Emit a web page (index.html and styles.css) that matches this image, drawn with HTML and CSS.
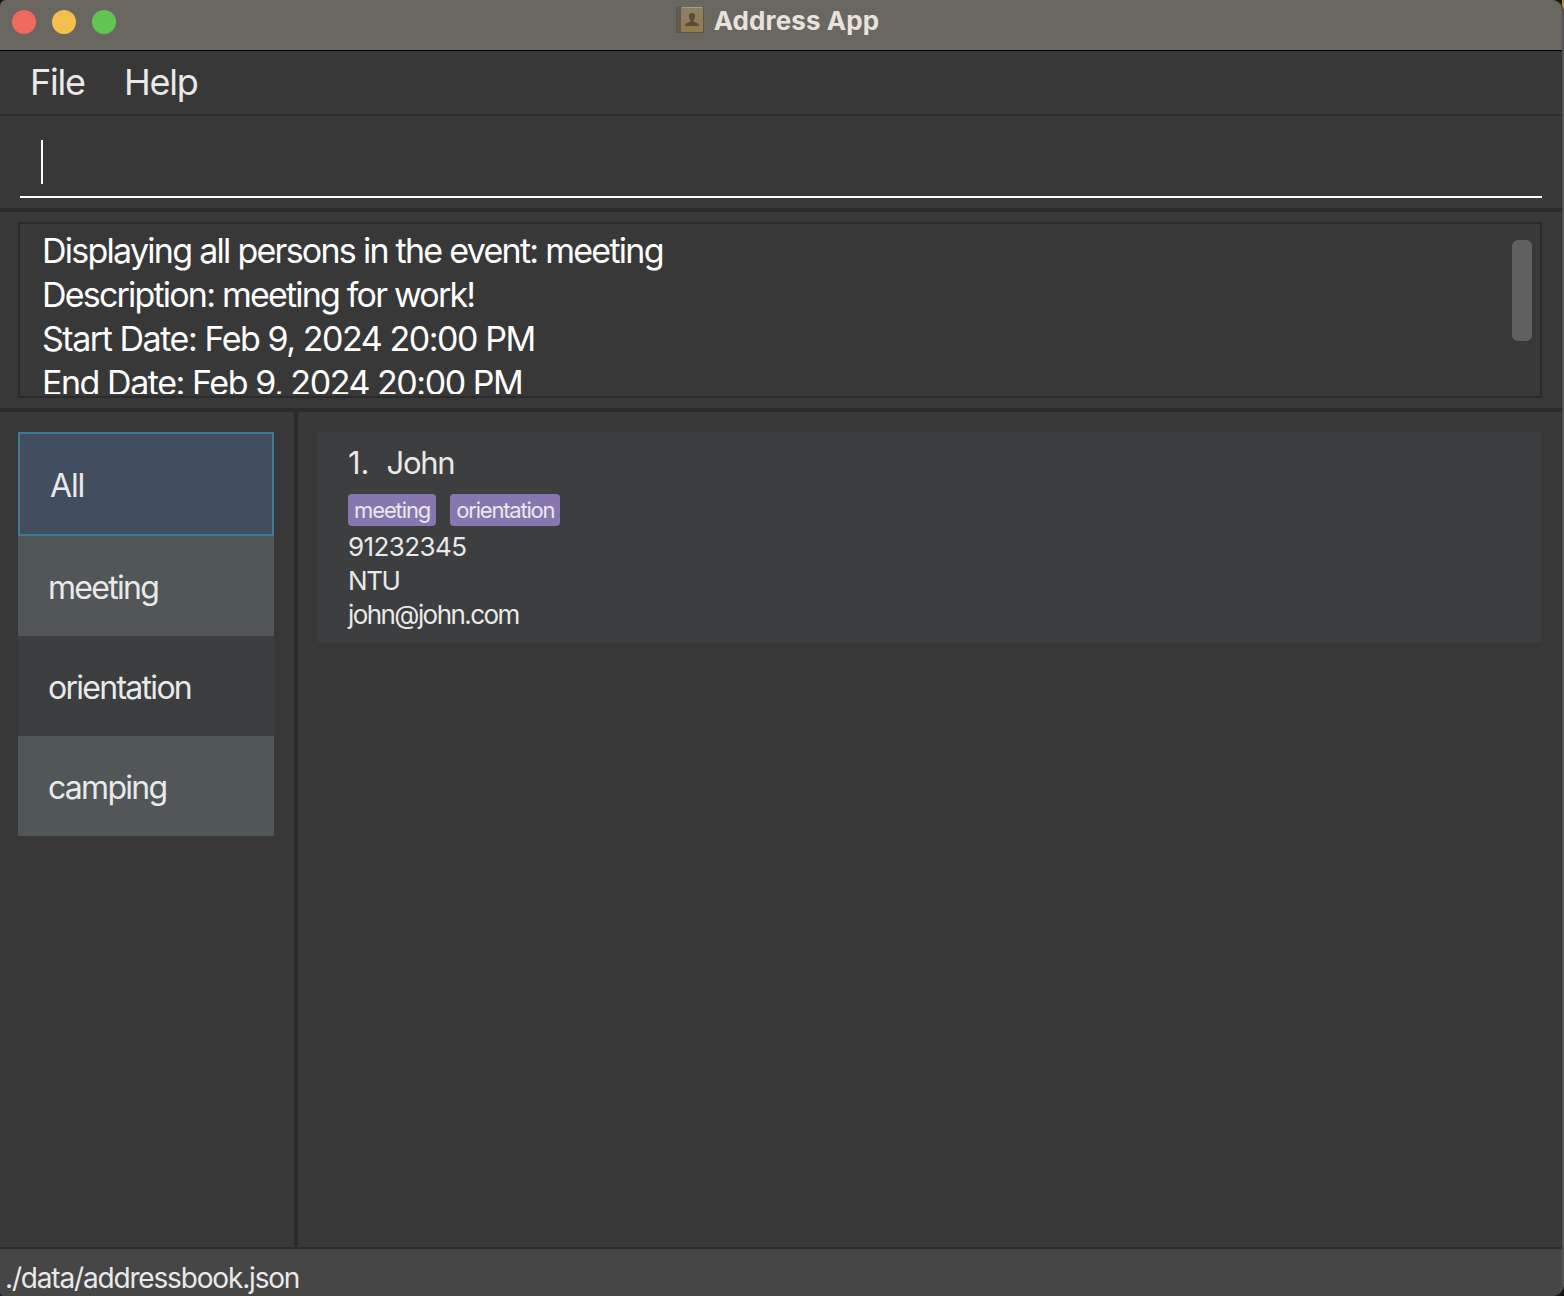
FILE: index.html
```html
<!DOCTYPE html>
<html lang="en">
<head>
<meta charset="utf-8">
<title>Address App</title>
<link rel="stylesheet" href="styles.css">
</head>
<body>
<div class="window">
  <header class="titlebar">
    <div class="lights"><span class="light close"></span><span class="light minimize"></span><span class="light zoom"></span></div>
    <h1 class="title">
      <svg class="book" width="30" height="28" viewBox="0 0 30 28">
        <defs><linearGradient id="cover" x1="0" y1="0" x2="0" y2="1"><stop offset="0" stop-color="#8c7f6b"/><stop offset="1" stop-color="#957b4d"/></linearGradient></defs>
        <rect x="1" y="1" width="28" height="26" rx="1.500" fill="#5d554a"/>
        <rect x="2" y="1" width="4" height="25" fill="#625b54"/>
        <rect x="6" y="1" width="22" height="25" rx="1" fill="url(#cover)"/>
        <path d="M7 1.500h20" stroke="#a99a7d"/>
        <path d="M14 10.500c0-2.500 1-3.500 3-3.500s3 1 3 3.500c0 1.600-.6 2.800-1.500 3.700v1.300c1.500 1 5.500 1.200 5.500 4.500H10c0-3.300 4-3.500 5.500-4.500v-1.300C14.600 13.300 14 12.100 14 10.500z" fill="#584c3c"/>
      </svg>
      <span>Address App</span>
    </h1>
  </header>
  <nav class="menubar"><span class="menu-file">File</span><span class="menu-help">Help</span></nav>
  <section class="command"><div class="field"><span class="caret"></span></div></section>
  <section class="result">
    <div class="result-box">
      <div class="result-text">
        <p class="line-event">Displaying all persons in the event: meeting</p>
        <p class="line-desc">Description: meeting for work!</p>
        <p class="line-date">Start Date: Feb 9, 2024 20:00 PM</p>
        <p class="line-date">End Date: Feb 9, 2024 20:00 PM</p>
      </div>
      <div class="thumb"></div>
    </div>
  </section>
  <main class="split">
    <ul class="events">
      <li class="selected">All</li>
      <li class="odd">meeting</li>
      <li>orientation</li>
      <li class="odd">camping</li>
    </ul>
    <section class="persons">
      <article class="card">
        <h2 class="name"><span class="index">1.</span><span>John</span></h2>
        <div class="tags"><span class="tag">meeting</span><span class="tag">orientation</span></div>
        <p class="phone">91232345</p>
        <p class="address">NTU</p>
        <p class="email">john@john.com</p>
      </article>
    </section>
  </main>
  <footer class="status">./data/addressbook.json</footer>
</div>
</body>
</html>
```
FILE: styles.css
```css
* { box-sizing: border-box; margin: 0; padding: 0; }
body { background: linear-gradient(#c58a2c 0 8px, #151515 12px) 100% 0 / 2px 20px no-repeat, #151515; font-family: Inter, "Liberation Sans", sans-serif; color: #e9e9e9; overflow: hidden; }
.window { width: 1564px; height: 1296px; display: flex; flex-direction: column; background: #383838; border-right: 2px solid #555; border-radius: 6px 12px 12px 4px; overflow: hidden; }
.window span, .window p, .window li, .status { white-space: nowrap; }

.titlebar { height: 51px; flex: none; background: #6a6660; border-bottom: 1px solid #000; display: grid; grid-template-columns: 1fr auto 1fr; align-items: start; }
.lights { display: flex; gap: 16px; padding: 10px 0 0 12px; }
.light { width: 24px; height: 24px; border-radius: 50%; }
.close { background: #ed6a5e; }
.minimize { background: #f5bf4f; }
.zoom { background: #61c554; }
.title { display: flex; gap: 9px; height: 40px; align-items: center; padding-right: 8px; font-size: 26px; font-weight: 700; color: #e6e2dc; letter-spacing: 0.1px; }

.menubar { height: 65px; flex: none; border-bottom: 2px solid #2b2b2b; display: flex; gap: 39px; padding-left: 30px; font-size: 36px; line-height: 62px; letter-spacing: -1.2px; }
.command { height: 96px; flex: none; padding: 24px 20px 0; border-bottom: 4px solid #2b2b2b; }
.field { height: 58px; border-bottom: 2px solid #fff; padding-left: 21px; }
.caret { display: block; width: 2px; height: 44px; background: #fff; }

.result { height: 200px; flex: none; padding: 10px 20px 10px 18px; border-bottom: 4px solid #2b2b2b; }
.result-box { height: 176px; border: 2px solid #2b2b2b; padding: 0 8px 2px 22px; display: flex; justify-content: space-between; }
.result-text { height: 170px; padding-top: 5px; overflow: hidden; font-size: 34px; line-height: 44px; color: #fff; }
.line-event { letter-spacing: -1.73px; }
.line-desc { letter-spacing: -1.8px; }
.line-date { letter-spacing: -1.45px; }
.thumb { width: 20px; height: 101px; margin-top: 16px; border-radius: 6px; background: #606060; }

.split { flex: 1; min-height: 0; display: flex; }
.events { width: 298px; flex: none; list-style: none; padding: 20px 20px 0 18px; border-right: 4px solid #2b2b2b; font-size: 32px; letter-spacing: -1.72px; }
.events li { height: 100px; padding: 2px 0 0 30px; line-height: 100px; background: #3c3e3f; }
.events .odd { background: #515658; }
.events .selected { height: 104px; padding-top: 1px; line-height: 102px; letter-spacing: -1.2px; background: #424d5f; border: 2px solid #3e7b91; }
.persons { flex: 1; padding: 20px 20px 0; }
.card { height: 210px; padding: 10px 30px; background: #3c3e3f; font-size: 26px; line-height: 34px; }
.name { display: flex; gap: 17px; font-size: 31px; font-weight: 400; line-height: 42px; letter-spacing: -1.3px; }
.index { letter-spacing: 0; }
.tags { display: flex; gap: 14px; height: 32px; margin: 10px 0 4px; }
.tag { padding: 0 6px; border-radius: 4px; background: #8777b0; font-size: 22px; line-height: 33px; letter-spacing: -1.2px; }
.tag:first-child { letter-spacing: -1.1px; }
.phone { letter-spacing: -0.6px; }
.address { letter-spacing: -1.4px; }
.email { letter-spacing: -1.57px; }
.status { height: 49px; flex: none; border-top: 2px solid #2b2b2b; background: #464646; padding-left: 5px; font-size: 28px; line-height: 58px; letter-spacing: -1.17px; }
```
